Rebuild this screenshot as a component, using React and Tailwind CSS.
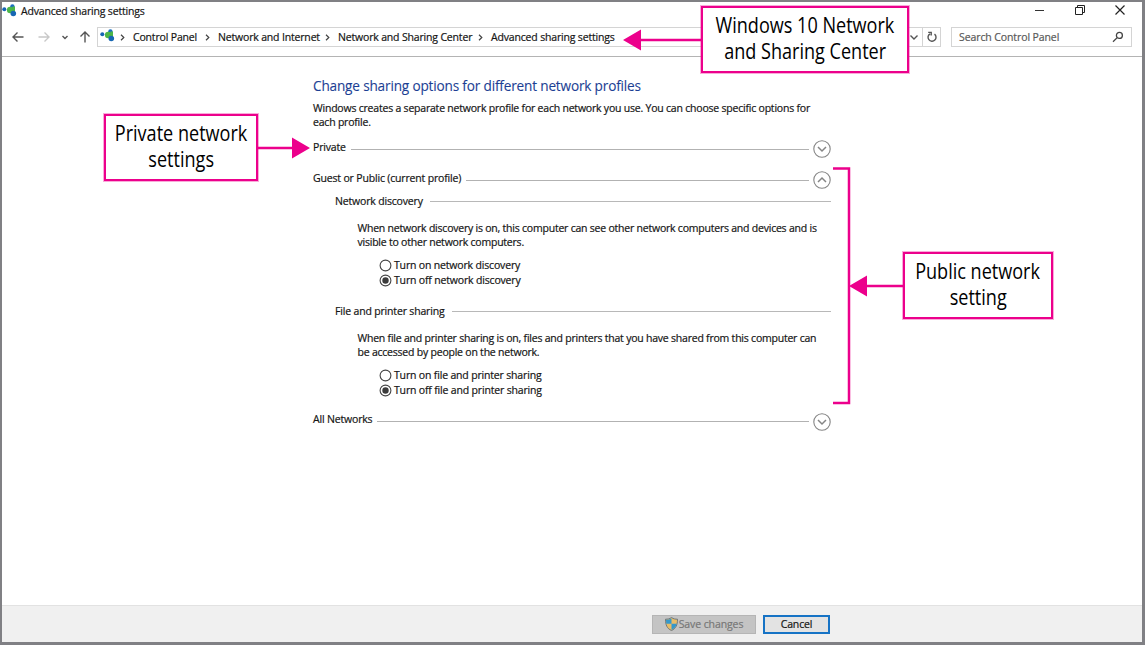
const ui = "font-['Open_Sans','Noto_Sans',sans-serif]";

function NetworkIcon({ className }) {
  return (
    <svg viewBox="0 0 15 13" className={className}>
      <circle cx="2.3" cy="5.2" r="2" fill="#1565b5" />
      <circle cx="10.4" cy="2.4" r="2.2" fill="#1a6fc0" />
      <circle cx="8.2" cy="6" r="3.3" fill="#4cb648" />
      <path d="M10.5 2.5H13V8H10Z" fill="#4cb648" />
      <circle cx="11.3" cy="9.5" r="2.8" fill="#1767b3" />
    </svg>
  );
}

function Arrow({ d, className, color = "#555555" }) {
  return (
    <svg viewBox="0 0 12 12" className={className} fill="none" stroke={color} strokeWidth="1.4">
      <path d={d} />
    </svg>
  );
}

function Crumb({ children, width, gap }) {
  return (
    <div className={`flex shrink-0 items-center ${gap}`}>
      <svg viewBox="0 0 5 7" className="h-[7px] w-[5px] shrink-0" fill="none" stroke="#444" strokeWidth="1.2">
        <path d="M1 .8 L3.8 3.5 L1 6.2" />
      </svg>
      <span className={`mt-px ml-2 shrink-0 whitespace-nowrap ${width}`}>{children}</span>
    </div>
  );
}

function Chevron({ up }) {
  return (
    <svg viewBox="0 0 18 18" className="ml-1 h-[18px] w-[18px] shrink-0" fill="none" stroke="#858585">
      <circle cx="9" cy="9" r="8.2" strokeWidth="1.1" />
      <path d={up ? "M5 11 L9 7 L13 11" : "M5 7 L9 11 L13 7"} strokeWidth="1.5" />
    </svg>
  );
}

function Profile({ label, up, className }) {
  return (
    <div className={`flex h-[18px] items-center ${className}`}>
      <span className="mr-[5px] -mt-[3px] whitespace-nowrap">{label}</span>
      <div className="h-px grow bg-[#b2b2b2]" />
      <Chevron up={up} />
    </div>
  );
}

function Radio({ on, children }) {
  return (
    <div className="flex h-[15.5px] items-center">
      <svg viewBox="0 0 13 13" className="mr-[2px] h-[13px] w-[13px] shrink-0">
        <circle cx="6.5" cy="6.5" r="5.4" fill="white" stroke="#444" strokeWidth="1.1" />
        {on && <circle cx="6.5" cy="6.5" r="3.2" fill="#3c3c3c" />}
      </svg>
      <span className="mt-px whitespace-nowrap">{children}</span>
    </div>
  );
}

function Section({ title, lines, options, className }) {
  return (
    <section className={`pl-[22px] tracking-[-0.17px] ${className}`}>
      <div className="flex h-[14px] items-center">
        <span className="mt-px mr-[7px] whitespace-nowrap">{title}</span>
        <div className="h-px grow bg-[#b8b8b8]" />
      </div>
      <div className="mt-[14px] pl-[22.5px] leading-[13.5px] tracking-[-0.22px]">
        {lines.map((l) => <p key={l} className="whitespace-nowrap">{l}</p>)}
      </div>
      <div className="mt-[8.5px] pl-[44px] tracking-[-0.17px]">
        <Radio>{options[0]}</Radio>
        <Radio on>{options[1]}</Radio>
      </div>
    </section>
  );
}

function Callout({ lines, className }) {
  return (
    <div className={`absolute flex flex-col items-center justify-center border-2 border-[#ec008c] bg-white pb-[3px] font-['Open_Sans',sans-serif] text-[21px] leading-[26px] tracking-normal text-black shadow-[0_0_0_1px_#ec008c55] [-webkit-text-stroke:0] ${className}`}>
      {lines.map((l) => <span key={l} className="scale-x-[0.86] whitespace-nowrap">{l}</span>)}
    </div>
  );
}

export default function App() {
  return (
    <div className={`relative flex h-[645px] w-[1145px] flex-col overflow-hidden border-2 border-r-[3px] border-b-[3px] border-[#808084] bg-white text-[10.5px] tracking-[-0.17px] text-[#151515] [-webkit-text-stroke:0.2px] ${ui}`}>
      <header className="flex h-[55px] shrink-0 flex-col border-b border-[#b4b4b4]">
        <div className="flex h-[20px] shrink-0 items-center">
          <NetworkIcon className="-mt-1 h-[13px] w-[15px]" />
          <span className="ml-1 whitespace-nowrap">Advanced sharing settings</span>
          <div className="-mt-1 ml-auto flex items-center gap-[30px] pr-[17px]">
            <svg viewBox="0 0 10 10" className="h-[10px] w-[10px]" stroke="#333"><path d="M0 5.5H9" /></svg>
            <svg viewBox="0 0 10 10" className="h-[10px] w-[10px]" fill="none" stroke="#222"><path d="M.5 2.5H7.5V9.5H.5ZM2.5 2.5V.5H9.5V7.5H7.5" /></svg>
            <svg viewBox="0 0 10 10" className="h-[10px] w-[10px]" fill="none" stroke="#222"><path d="M.5 .5L9.5 9.5M9.5 .5L.5 9.5" strokeWidth="1.2" /></svg>
          </div>
        </div>
        <div className="mt-[5px] flex h-[20px] items-center">
          <Arrow className="ml-[10px] h-3 w-3" d="M11.5 6H1M5.5 1.5L1 6L5.5 10.5" />
          <Arrow className="ml-[14px] h-3 w-3" color="#c8c8c8" d="M.5 6H11M6.5 1.5L11 6L6.5 10.5" />
          <Arrow className="ml-[9px] h-3 w-3" d="M3.5 5L6 7.5L8.5 5" />
          <Arrow className="ml-2 h-3 w-3" d="M6 11.5V1M1.5 5.5L6 1L10.5 5.5" />
          <div className="ml-[6px] flex h-5 w-[844px] items-center border border-[#d4d4d4]">
            <NetworkIcon className="ml-[2px] -mt-1 h-[13px] w-[15px] shrink-0" />
            <Crumb gap="ml-[5px]" width="w-[64px]">Control Panel</Crumb>
            <Crumb gap="ml-[8px]" width="w-[100px]">Network and Internet</Crumb>
            <Crumb gap="ml-[7px]" width="w-[134px]">Network and Sharing Center</Crumb>
            <Crumb gap="ml-[6px]" width="w-[125px]">Advanced sharing settings</Crumb>
            <div className="ml-auto flex h-full items-center">
              <Arrow className="mr-[2px] h-3 w-3" d="M2.5 4.5L6 8L9.5 4.5" />
              <div className="flex h-full w-[18px] items-center justify-center border-l border-[#d4d4d4]">
                <svg viewBox="0 0 12 12" className="h-3 w-3" fill="none" stroke="#555" strokeWidth="1.4"><path d="M8.5 3.1A4 4 0 1 1 4 2.8M2.2 1.4H5.2V4.4" /></svg>
              </div>
            </div>
          </div>
          <div className="ml-[10px] flex h-5 w-[181px] items-center border border-[#d4d4d4] px-[7px] text-[#595959]">
            <span className="mt-px tracking-[-0.1px] whitespace-nowrap">Search Control Panel</span>
            <svg viewBox="0 0 12 12" className="ml-auto h-3 w-3" fill="none" stroke="#444" strokeWidth="1.3"><circle cx="7.4" cy="4.4" r="3" /><path d="M5.2 6.6L1 10.8" /></svg>
          </div>
        </div>
      </header>

      <main className="grow pl-[311px]">
        <div className="flex w-[518px] flex-col">
          <h1 className="mt-[19px] h-5 text-[13.6px] leading-5 whitespace-nowrap text-[#1c3f94] [-webkit-text-stroke:0.1px]">Change sharing options for different network profiles</h1>
          <div className="mt-[6px] leading-[13.5px] tracking-[-0.21px] whitespace-nowrap">
            <p>Windows creates a separate network profile for each network you use. You can choose specific options for</p>
            <p>each profile.</p>
          </div>
          <Profile className="mt-[11px]" label="Private" />
          <Profile className="mt-[13px]" label="Guest or Public (current profile)" up />
          <Section
            className="mt-[5px]"
            title="Network discovery"
            lines={["When network discovery is on, this computer can see other network computers and devices and is", "visible to other network computers."]}
            options={["Turn on network discovery", "Turn off network discovery"]}
          />
          <Section
            className="mt-[15.5px]"
            title="File and printer sharing"
            lines={["When file and printer sharing is on, files and printers that you have shared from this computer can", "be accessed by people on the network."]}
            options={["Turn on file and printer sharing", "Turn off file and printer sharing"]}
          />
          <Profile className="mt-[14px]" label="All Networks" />
        </div>
      </main>

      <footer className="flex h-[37px] shrink-0 items-center border-t border-[#e2e2e2] bg-[#f0f0f0] pl-[650px]">
        <div className="flex h-[19px] w-[104px] items-center justify-center border border-[#b5b5b5] bg-[#c4c4c4] text-[#777]">
          <svg viewBox="0 0 13 14" className="h-[14px] w-[13px] shrink-0">
            <path d="M6.5 .5C4.5 2 2.5 2.2 .5 2.2C.5 8 2 11.5 6.5 13.5C11 11.5 12.5 8 12.5 2.2C10.5 2.2 8.5 2 6.5 .5Z" fill="#e8bd68" stroke="#70787c" />
            <path d="M6.5 1.3V6.8H1.3C1.1 5.6 1 4.2 1 2.8C3 2.8 4.9 2.4 6.5 1.3ZM6.5 6.8H11.7C11.1 9.8 9.5 11.8 6.5 12.9Z" fill="#3698cb" />
          </svg>
          <span className="mt-0.5 ml-px tracking-[-0.1px] whitespace-nowrap">Save changes</span>
        </div>
        <div className="ml-[7px] flex h-[19px] w-[67px] items-center justify-center border-2 border-[#1673c5] bg-[#e3e3e3] pt-0.5">Cancel</div>
      </footer>

      <svg viewBox="0 0 1145 645" className="pointer-events-none absolute -top-0.5 -left-0.5 h-[645px] w-[1145px]" fill="none" stroke="#ec008c" strokeWidth="2.5">
        <path d="M640 40H702M258 148H293M866 286H904M833 168.5H849V403H833" />
        <path d="M623 40L641 29.5V50.5ZM310 148L292 137.5V158.5ZM849 286L867 275.5V296.5Z" fill="#ec008c" stroke="none" />
      </svg>
      <Callout className="top-[4px] left-[699px] h-[67px] w-[208px]" lines={["Windows 10 Network", "and Sharing Center"]} />
      <Callout className="top-[112px] left-[102px] h-[67px] w-[154px]" lines={["Private network", "settings"]} />
      <Callout className="top-[250px] left-[901px] h-[67px] w-[150px]" lines={["Public network", "setting"]} />
    </div>
  );
}
